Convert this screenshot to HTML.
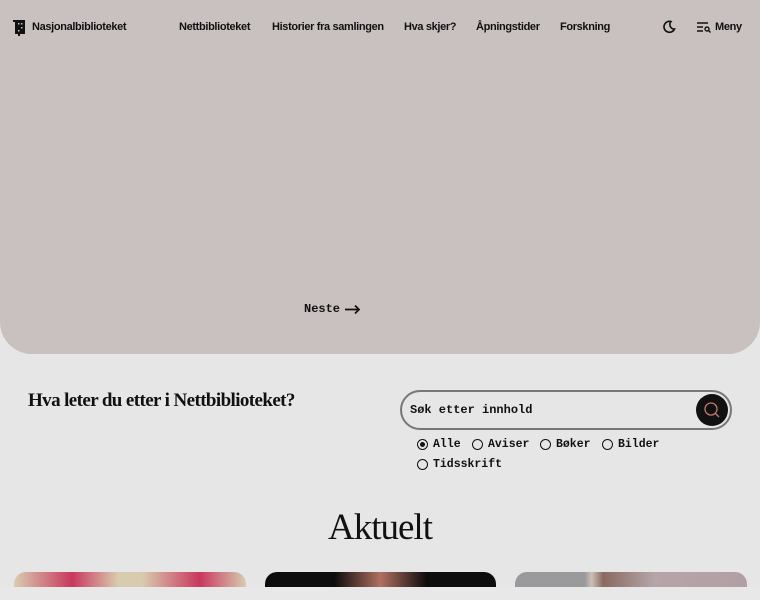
<!DOCTYPE html>
<html><head><meta charset="utf-8"><style>
*{margin:0;padding:0;box-sizing:border-box}
html,body{width:760px;height:600px;overflow:hidden}
body{background:#e6e6e6;font-family:"Liberation Sans",sans-serif;color:#111;position:relative}
.hero{position:absolute;left:0;top:0;width:760px;height:354px;background:#c8c1c0;border-radius:0 0 32px 32px}
.nav{position:absolute;top:21px;font-size:11px;font-weight:bold;letter-spacing:-0.35px}
.mono{font-family:"Liberation Mono",monospace;font-weight:bold}
.q{position:absolute;left:28px;top:390px;font-family:"Liberation Serif",serif;font-size:19px;font-weight:bold;letter-spacing:-0.6px}
.search{position:absolute;left:400px;top:390px;width:332px;height:40px;border:2px solid #777;border-radius:22px}
.search span{position:absolute;left:8px;top:11px;font-size:12px}
.btn{position:absolute;right:2px;top:2px;width:32px;height:32px;border-radius:50%;background:#111}
.r{position:absolute;font-size:11.5px;display:flex;align-items:center}
.r i{display:inline-block;width:11px;height:11px;border:1.6px solid #111;border-radius:50%;margin-right:5px;position:relative}
.r i.on::after{content:"";position:absolute;left:1.5px;top:1.5px;width:5px;height:5px;border-radius:50%;background:#111}
.ak{position:absolute;left:0;width:760px;text-align:center;top:506px;font-family:"Liberation Serif",serif;font-size:37px;letter-spacing:-1px}
.card{position:absolute;top:572px;height:15px;border-radius:12px 12px 0 0;overflow:hidden}
.bar{position:absolute;left:0;top:587px;width:760px;height:13px;background:#e8e8e8}
</style></head><body>
<div class="hero"></div>
<svg style="position:absolute;left:13px;top:19px" width="13" height="17" viewBox="0 0 13 17"><rect x="2" y="1" width="10" height="14" fill="#111"/><rect x="0" y="1" width="2" height="2" fill="#111"/><rect x="5" y="15" width="2" height="2" fill="#111"/><rect x="5" y="4" width="1.5" height="1.5" fill="#c8c1c0"/><rect x="8" y="4" width="1.5" height="1.5" fill="#c8c1c0"/><rect x="8" y="8" width="1.5" height="1.5" fill="#c8c1c0"/><rect x="5" y="11" width="1.5" height="1.5" fill="#c8c1c0"/></svg>
<div class="nav" style="left:32px">Nasjonalbiblioteket</div>
<div class="nav" style="left:179px">Nettbiblioteket</div>
<div class="nav" style="left:272px">Historier fra samlingen</div>
<div class="nav" style="left:404px">Hva skjer?</div>
<div class="nav" style="left:476px">Åpningstider</div>
<div class="nav" style="left:560px">Forskning</div>
<svg style="position:absolute;left:662px;top:20px" width="14" height="14" viewBox="0 0 14 14"><path d="M9 1.5A5.5 5.5 0 1 0 12.5 9 4.5 4.5 0 0 1 9 1.5Z" fill="none" stroke="#111" stroke-width="1.6"/></svg>
<svg style="position:absolute;left:697px;top:22px" width="14" height="11" viewBox="0 0 14 11"><path d="M0 1h11M0 5h6M0 9h6" stroke="#111" stroke-width="1.5"/><circle cx="10" cy="7" r="2" fill="none" stroke="#111" stroke-width="1.4"/><path d="M11.5 8.5l2 2" stroke="#111" stroke-width="1.4"/></svg>
<div class="nav" style="left:715px">Meny</div>
<div class="mono" style="position:absolute;left:304px;top:302px;font-size:12px">Neste</div>
<svg style="position:absolute;left:345px;top:304px" width="16" height="11" viewBox="0 0 16 11"><path d="M0 5.5h14M10 1.5l4 4-4 4" fill="none" stroke="#111" stroke-width="1.7"/></svg>
<div class="q">Hva leter du etter i Nettbiblioteket?</div>
<div class="search"><span class="mono">Søk etter innhold</span><div class="btn"><svg width="32" height="32" viewBox="0 0 32 32"><circle cx="15" cy="15" r="6" fill="none" stroke="#c07a70" stroke-width="1.3"/><path d="M19.5 19.5l3.5 3.5" stroke="#c07a70" stroke-width="1.3"/></svg></div></div>
<div class="r mono" style="left:417px;top:438px"><i class="on"></i>Alle</div>
<div class="r mono" style="left:472px;top:438px"><i></i>Aviser</div>
<div class="r mono" style="left:540px;top:438px"><i></i>Bøker</div>
<div class="r mono" style="left:602px;top:438px"><i></i>Bilder</div>
<div class="r mono" style="left:417px;top:458px"><i></i>Tidsskrift</div>
<div class="ak">Aktuelt</div>
<div class="card" style="left:14px;width:232px;background:linear-gradient(90deg,#d8ccb0 0%,#c9385e 25%,#d8ccb0 45%,#d8ccb0 55%,#c9385e 80%,#d8ccb0 100%)"></div>
<div class="card" style="left:265px;width:231px;background:linear-gradient(90deg,#0c0c0c 30%,#b07060 50%,#0c0c0c 70%)"></div>
<div class="card" style="left:515px;width:232px;background:linear-gradient(90deg,#9a9a9c 0%,#9a9a9c 30%,#ccc0b8 33%,#8a6a60 38%,#b5a4a8 60%,#b0a0a4 100%)"></div>
<div class="bar"></div>
</body></html>
